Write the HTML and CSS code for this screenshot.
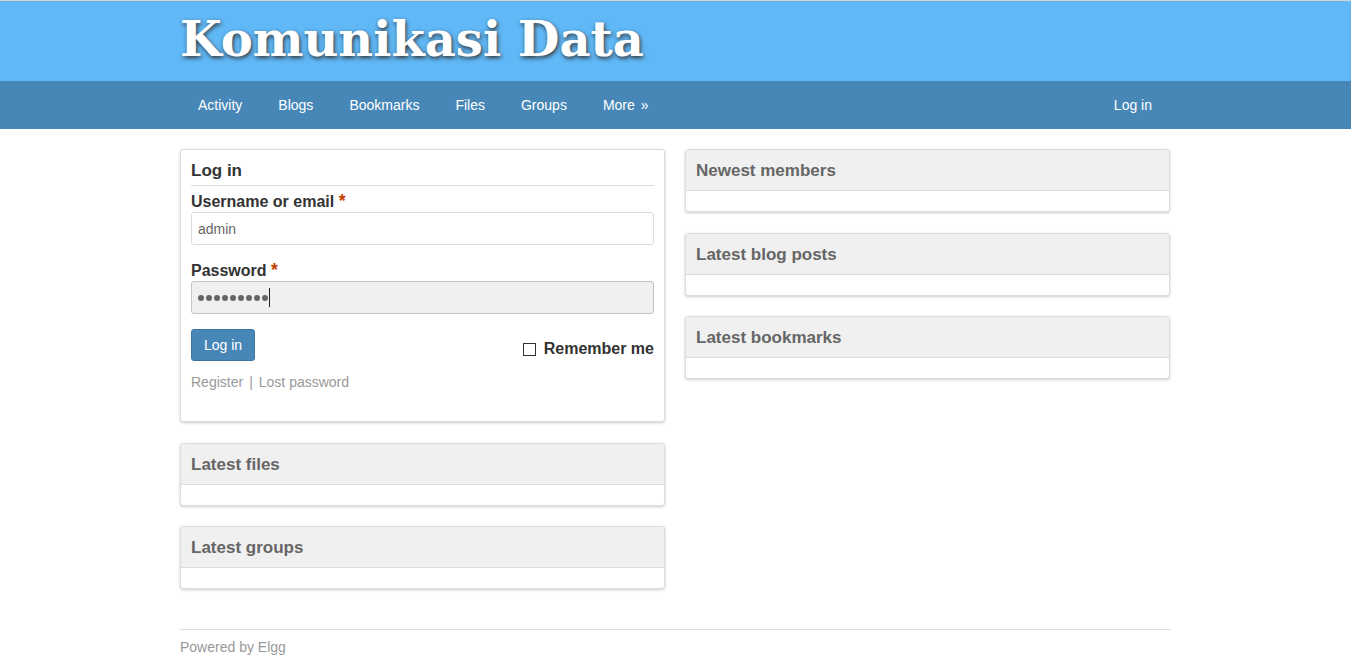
FILE: index.html
```html
<!DOCTYPE html>
<html lang="en">
<head>
<meta charset="utf-8">
<title>Komunikasi Data</title>
<link rel="stylesheet" href="styles.css">
</head>
<body>
<div class="page">
  <header class="site-header">
    <div class="inner">
      <h1 class="site-title">Komunikasi Data</h1>
    </div>
  </header>
  <nav class="navbar">
    <div class="inner nav-inner">
      <ul class="menu">
        <li><a href="#">Activity</a></li>
        <li><a href="#">Blogs</a></li>
        <li><a href="#">Bookmarks</a></li>
        <li><a href="#">Files</a></li>
        <li><a href="#">Groups</a></li>
        <li><a href="#">More<span class="raquo">&raquo;</span></a></li>
      </ul>
      <ul class="menu">
        <li><a href="#">Log in</a></li>
      </ul>
    </div>
  </nav>
  <main class="inner layout">
    <div class="column">
      <section class="login-box">
        <h2 class="login-title">Log in</h2>
        <form class="login-form">
          <label class="field-label">Username or email <span class="req">*</span></label>
          <input class="text-input" type="text" value="admin">
          <label class="field-label pw-label">Password <span class="req">*</span></label>
          <div class="text-input focused"><span class="dot"></span><span class="dot"></span><span class="dot"></span><span class="dot"></span><span class="dot"></span><span class="dot"></span><span class="dot"></span><span class="dot"></span><span class="dot"></span><span class="caret"></span></div>
          <div class="form-actions">
            <button class="btn" type="button">Log in</button>
            <label class="remember"><span class="checkbox"></span>Remember me</label>
          </div>
          <div class="login-links"><a href="#">Register</a><span class="sep">|</span><a href="#">Lost password</a></div>
        </form>
      </section>
      <section class="module"><div class="module-head"><h3>Latest files</h3></div><div class="module-body"></div></section>
      <section class="module"><div class="module-head"><h3>Latest groups</h3></div><div class="module-body"></div></section>
    </div>
    <div class="column">
      <section class="module"><div class="module-head"><h3>Newest members</h3></div><div class="module-body"></div></section>
      <section class="module"><div class="module-head"><h3>Latest blog posts</h3></div><div class="module-body"></div></section>
      <section class="module"><div class="module-head"><h3>Latest bookmarks</h3></div><div class="module-body"></div></section>
    </div>
  </main>
  <footer class="inner footer">
    <div class="footer-text">Powered by Elgg</div>
  </footer>
</div>
</body>
</html>
```
FILE: styles.css
```css
html, body {
  margin: 0;
  padding: 0;
  background: #fff;
}
body {
  font-family: "Liberation Sans", Arial, sans-serif;
  font-size: 14px;
  color: #333;
  border-top: 1px solid #d4d4d4;
}
.inner {
  width: 991px;
  padding-right: 1px;
  margin: 0 auto;
  box-sizing: border-box;
}
.site-header {
  background: #60b8f7;
  height: 80px;
}
.site-title {
  margin: 0;
  padding-top: 8px;
  font-family: "DejaVu Serif", Georgia, serif;
  font-weight: bold;
  font-size: 48px;
  line-height: 60px;
  letter-spacing: 0;
  color: #fff;
  text-shadow: 1px 2px 4px #333;
}
.navbar {
  background: #4787b8;
  height: 48px;
}
.nav-inner {
  display: flex;
  justify-content: space-between;
}
.menu {
  list-style: none;
  margin: 0;
  padding: 0;
  display: flex;
}
.menu a {
  display: block;
  padding: 0 18px;
  line-height: 48px;
  color: #fff;
  text-decoration: none;
  font-size: 14px;
}
.raquo {
  margin-left: 6px;
}
.layout {
  display: grid;
  grid-template-columns: 485px 485px;
  column-gap: 20px;
  padding-top: 20px;
}
.column {
  display: flex;
  flex-direction: column;
  gap: 20.5px;
}
.login-box, .module {
  border: 1px solid #dcdcdc;
  border-radius: 3px;
  box-shadow: 0 1px 3px rgba(0,0,0,0.2);
  background: #fff;
}
.login-box {
  padding: 10px;
}
.login-title {
  margin: 0 0 6px;
  padding-top: 1px;
  padding-bottom: 4px;
  border-bottom: 1px solid #dcdcdc;
  font-size: 17px;
  line-height: 20px;
  color: #333;
}
.login-form {
  display: flex;
  flex-direction: column;
}
.field-label {
  font-weight: bold;
  font-size: 16px;
  line-height: 20px;
  color: #333;
}
.pw-label {
  margin-top: 16px;
}
.req {
  color: #c24000;
  font-size: 110%;
  line-height: 1;
}
.text-input {
  margin: 0;
  width: 100%;
  height: 33px;
  box-sizing: border-box;
  border: 1px solid #dcdcdc;
  border-radius: 3px;
  padding: 0 6px;
  font-family: "Liberation Sans", Arial, sans-serif;
  font-size: 14px;
  color: #666;
  background: #fff;
  outline: none;
}
.text-input.focused {
  background: #f0f0f0;
  border-color: #c4c4c4;
  display: flex;
  align-items: center;
}
.dot {
  width: 6px;
  height: 6px;
  border-radius: 50%;
  background: #666;
  margin-right: 2px;
  flex: none;
}
.caret {
  width: 1px;
  height: 19px;
  background: #222;
  margin-left: -1px;
  flex: none;
}
.form-actions {
  margin-top: 15px;
  display: flex;
  justify-content: space-between;
  align-items: flex-start;
}
.btn {
  height: 32px;
  padding: 0 12px;
  border: 1px solid #3f76a0;
  border-radius: 3px;
  background: #4787b8;
  color: #fff;
  font-family: "Liberation Sans", Arial, sans-serif;
  font-size: 14px;
  cursor: pointer;
}
.remember {
  margin-top: 11px;
  display: flex;
  align-items: center;
  font-weight: bold;
  font-size: 16px;
  line-height: 18px;
  color: #333;
}
.checkbox {
  width: 11px;
  height: 11px;
  border: 1px solid #333;
  margin-right: 8px;
  background: #fff;
}
.login-links {
  margin-top: 12px;
  margin-bottom: 20px;
  line-height: 18px;
  color: #999;
}
.login-links a {
  color: #999;
  text-decoration: none;
}
.sep {
  margin: 0 6px;
}
.module-head {
  background: #f0f0f0;
  border-bottom: 1px solid #dcdcdc;
  padding: 11px 10px 9px;
  border-radius: 3px 3px 0 0;
}
.module-head h3 {
  margin: 0;
  font-size: 17px;
  line-height: 20px;
  color: #666;
}
.module-body {
  height: 20px;
}
.footer {
  margin-top: 40px;
  border-top: 1px solid #dcdcdc;
  padding-top: 8px;
}
.footer-text {
  color: #999;
  font-size: 14px;
  line-height: 18px;
}
```
